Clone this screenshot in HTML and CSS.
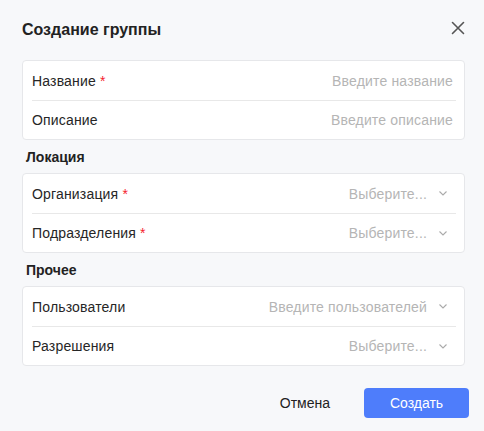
FILE: index.html
```html
<!DOCTYPE html>
<html lang="ru">
<head>
<meta charset="utf-8">
<link rel="stylesheet" href="styles.css">
</head>
<body>
<div class="dialog">
  <div class="header">
    <div class="title">Создание группы</div>
    <svg class="close" width="14" height="14" viewBox="0 0 14 14"><path d="M1.5 1.5L12.5 12.5M12.5 1.5L1.5 12.5" stroke="#555" stroke-width="1.6" stroke-linecap="round"/></svg>
  </div>

  <div class="card">
    <div class="row">
      <span class="label">Название <span class="req">*</span></span>
      <span class="ph">Введите название</span>
    </div>
    <div class="row">
      <span class="label">Описание</span>
      <span class="ph">Введите описание</span>
    </div>
  </div>

  <div class="section">Локация</div>
  <div class="card">
    <div class="row">
      <span class="label">Организация <span class="req">*</span></span>
      <span class="select"><span class="ph">Выберите...</span><svg class="chev" width="8" height="5" viewBox="0 0 8 5"><path d="M0.5 0.5L4 4L7.5 0.5" fill="none" stroke="#aaa" stroke-width="1.1"/></svg></span>
    </div>
    <div class="row">
      <span class="label">Подразделения <span class="req">*</span></span>
      <span class="select"><span class="ph">Выберите...</span><svg class="chev" width="8" height="5" viewBox="0 0 8 5"><path d="M0.5 0.5L4 4L7.5 0.5" fill="none" stroke="#aaa" stroke-width="1.1"/></svg></span>
    </div>
  </div>

  <div class="section">Прочее</div>
  <div class="card">
    <div class="row">
      <span class="label">Пользователи</span>
      <span class="select"><span class="ph">Введите пользователей</span><svg class="chev" width="8" height="5" viewBox="0 0 8 5"><path d="M0.5 0.5L4 4L7.5 0.5" fill="none" stroke="#aaa" stroke-width="1.1"/></svg></span>
    </div>
    <div class="row">
      <span class="label">Разрешения</span>
      <span class="select"><span class="ph">Выберите...</span><svg class="chev" width="8" height="5" viewBox="0 0 8 5"><path d="M0.5 0.5L4 4L7.5 0.5" fill="none" stroke="#aaa" stroke-width="1.1"/></svg></span>
    </div>
  </div>

  <div class="footer">
    <button class="btn cancel">Отмена</button>
    <button class="btn primary">Создать</button>
  </div>
</div>
</body>
</html>
```
FILE: styles.css
```css
* { box-sizing: border-box; }
html, body { margin: 0; padding: 0; }
body {
  background: #f7f8fa;
  font-family: "Liberation Sans", Arial, sans-serif;
  color: #222;
  font-size: 14px;
}
.dialog {
  width: 484px;
  height: 431px;
  padding: 0 19px 0 22px;
}
.header {
  height: 60px;
  display: flex;
  align-items: center;
  justify-content: space-between;
}
.title {
  font-size: 16px;
  font-weight: bold;
  color: #222;
}
.close { margin-top: -4px; }
.card {
  background: #fff;
  border: 1px solid #e6e7ea;
  border-radius: 4px;
  padding: 0 8px 0 9px;
}
.row {
  height: 40px;
  display: flex;
  align-items: center;
  justify-content: space-between;
  padding-right: 3px;
  border-bottom: 1px solid #e8e8e8;
  letter-spacing: 0.17px;
}
.row:last-child { border-bottom: none; height: 38px; }
.label { color: #262626; }
.req { color: #f5222d; }
.ph { color: #b5b5b5; }
.select { display: flex; align-items: center; }
.chev { margin-left: 12px; margin-right: 6px; }
.section {
  font-weight: bold;
  font-size: 14px;
  line-height: 20px;
  padding-left: 4px;
  margin: 7px 0 6px;
  color: #222;
}
.footer {
  display: flex;
  justify-content: flex-end;
  align-items: center;
  margin-top: 22px;
  margin-right: -4px;
}
.btn {
  font-family: inherit;
  font-size: 14px;
  height: 30px;
  border: none;
  border-radius: 4px;
  cursor: pointer;
}
.cancel {
  background: transparent;
  color: #222;
  padding: 0 16px;
  margin-right: 18px;
}
.primary {
  background: #4e7dfb;
  color: #fff;
  width: 105px;
}
```
